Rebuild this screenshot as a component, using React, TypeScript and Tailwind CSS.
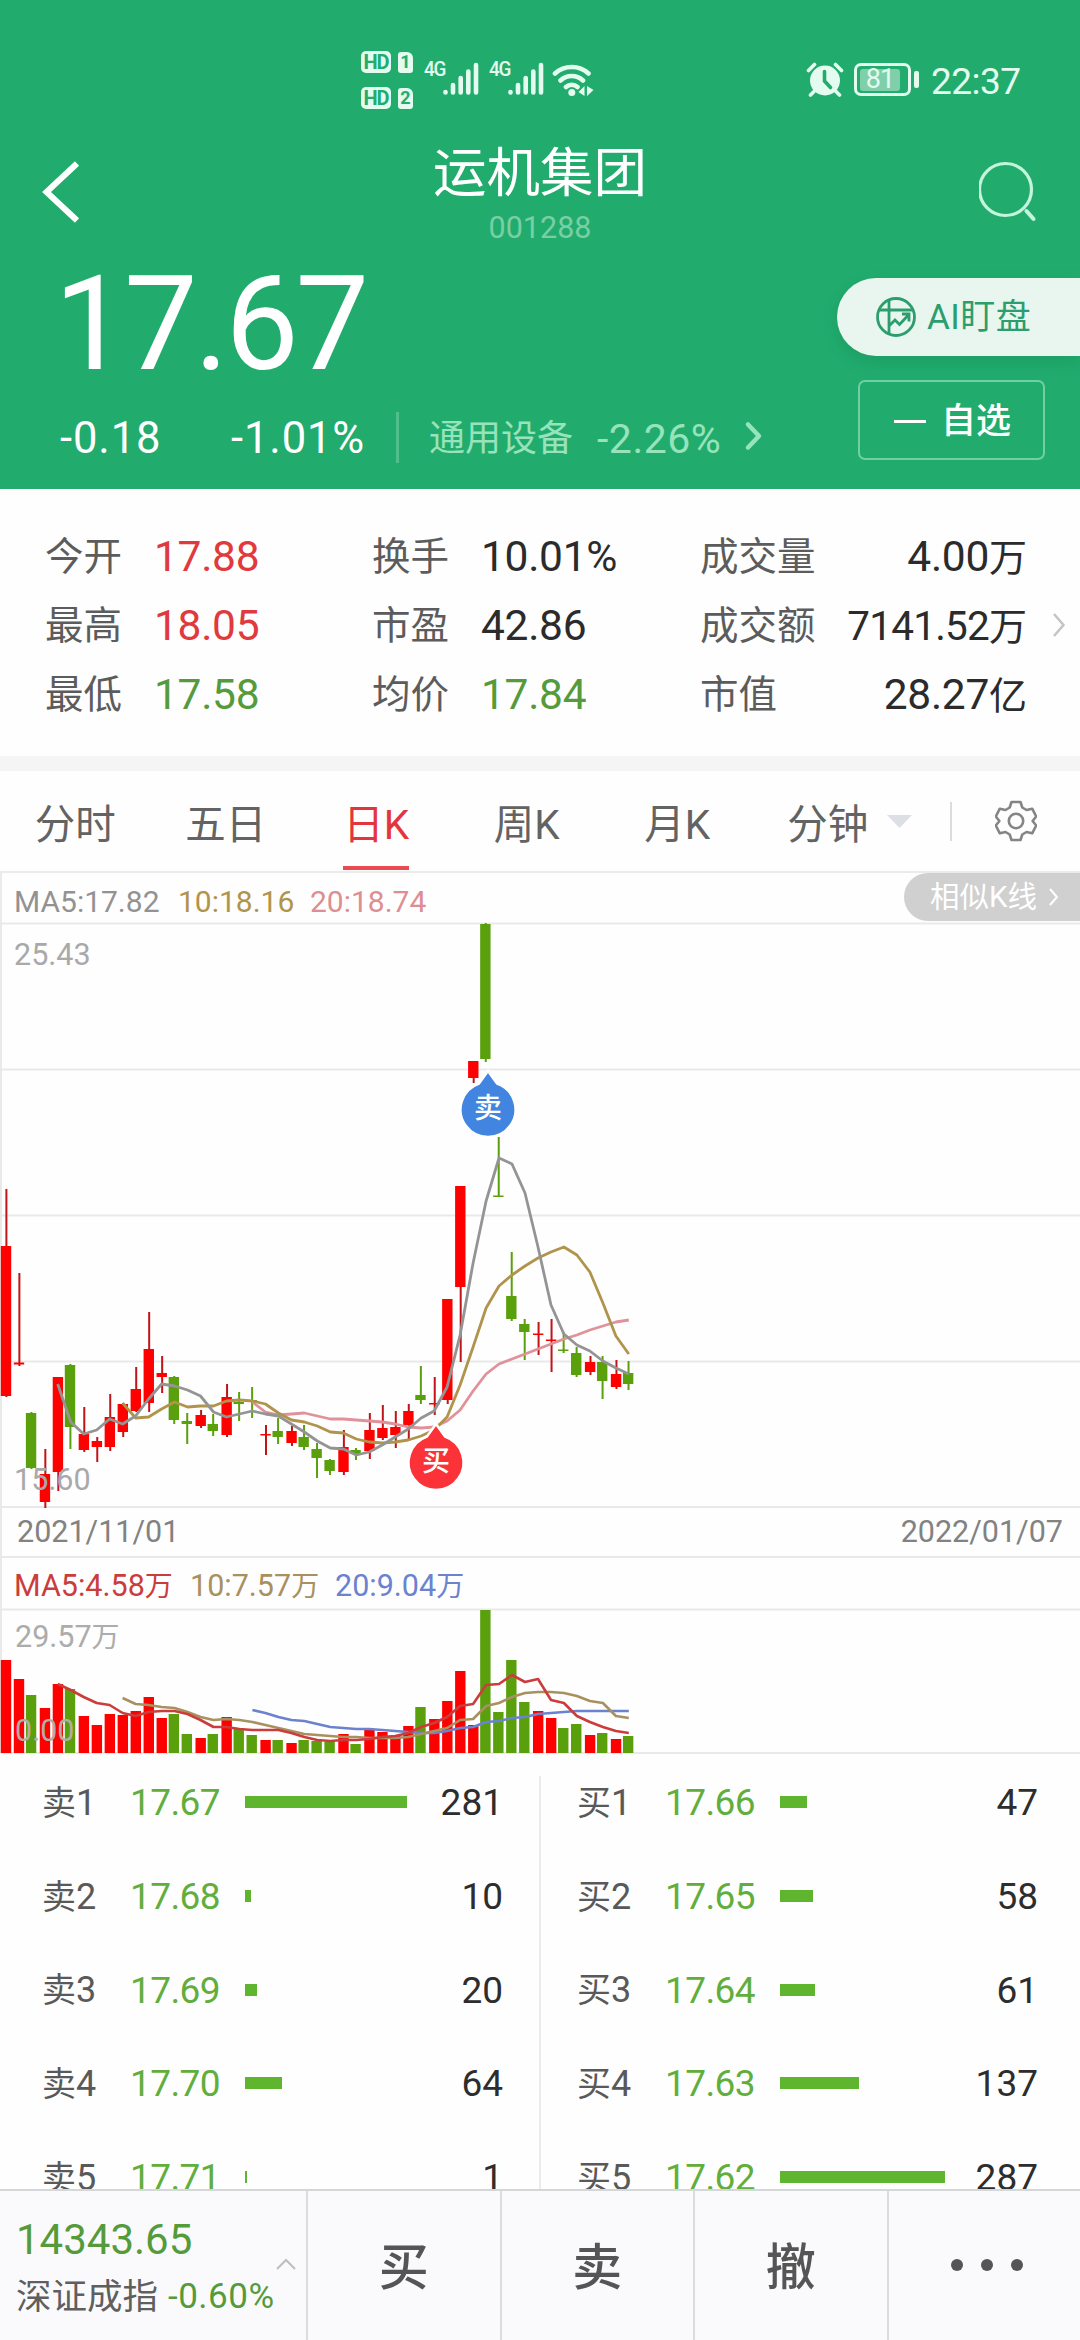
import type { ReactNode } from 'react';
import clsx from 'clsx';

const UP = '#ff0000';
const DOWN = '#5aa00c';

// [up, high, bodyTop, bodyBottom, low, volumeTop]
type Candle = [number, number, number, number, number, number];

const candles: Candle[] = [
  [1, 1189, 1246, 1396, 1397, 1660],
  [1, 1273, 1362.5, 1364.5, 1366, 1679],
  [0, 1412, 1413, 1468, 1469, 1695],
  [1, 1449, 1474, 1502, 1508, 1708],
  [1, 1377, 1377, 1472, 1491, 1684],
  [0, 1364, 1365, 1427, 1449, 1689],
  [1, 1407, 1434, 1450, 1452, 1716],
  [1, 1437, 1441, 1447, 1462, 1725],
  [1, 1394, 1417, 1447, 1451, 1714],
  [1, 1403, 1404, 1432, 1437, 1715],
  [1, 1367, 1389, 1411, 1412, 1711],
  [1, 1312, 1349, 1403, 1412, 1697],
  [1, 1356, 1373, 1377, 1393, 1718],
  [0, 1376, 1377, 1420, 1424, 1714],
  [0, 1413, 1421, 1424, 1444, 1734],
  [1, 1410, 1415, 1426, 1428, 1738],
  [0, 1414, 1424, 1431, 1436, 1734],
  [1, 1384, 1397, 1435, 1437, 1717],
  [0, 1392, 1402, 1404, 1421, 1728],
  [0, 1387, 1400, 1401, 1418, 1735],
  [1, 1425, 1434, 1435, 1455, 1740],
  [0, 1418, 1431, 1437, 1444, 1740],
  [1, 1426, 1431, 1443, 1446, 1743],
  [0, 1425, 1437, 1447, 1450, 1740],
  [0, 1443, 1449, 1458, 1478, 1741],
  [0, 1459, 1460, 1471, 1475, 1742],
  [1, 1430, 1447, 1472, 1475, 1734],
  [0, 1448, 1450, 1454, 1460, 1744],
  [1, 1413, 1430, 1451, 1459, 1730],
  [1, 1405, 1428, 1438, 1440, 1732],
  [1, 1411, 1427, 1435, 1448, 1736],
  [1, 1404, 1411, 1425, 1439, 1726],
  [0, 1366, 1395, 1400, 1404, 1707],
  [1, 1377, 1403, 1404, 1415, 1719],
  [1, 1299, 1299, 1400, 1404, 1701],
  [1, 1186, 1186, 1287, 1362, 1671],
  [1, 1061, 1061, 1078, 1083, 1725],
  [0, 923, 924, 1059, 1062, 1610],
  [0, 1137, 1195.5, 1196.5, 1197, 1712],
  [0, 1252, 1296, 1319, 1321, 1660],
  [0, 1319, 1324, 1332, 1360, 1702],
  [1, 1322, 1333.5, 1334.5, 1355, 1711],
  [1, 1319, 1339.5, 1340.5, 1372, 1718],
  [0, 1332, 1349.5, 1350.5, 1353, 1728],
  [0, 1347, 1353, 1375, 1377, 1724],
  [1, 1356, 1362, 1372, 1375, 1735],
  [0, 1356, 1362, 1381, 1399, 1733],
  [1, 1360, 1374, 1387, 1389, 1739],
  [0, 1361, 1373, 1384, 1390, 1736],
];

// Each average starts once enough sessions exist
const priceLines = [
  {
    start: 19,
    color: '#e0929a',
    ys: [1402, 1412, 1415, 1414, 1413, 1416, 1419, 1419, 1420, 1421, 1422, 1424, 1427, 1428, 1427, 1421, 1410, 1391, 1374, 1364, 1359, 1354, 1349, 1344, 1339, 1335, 1330, 1326, 1322, 1320],
  },
  {
    start: 9,
    color: '#b1944c',
    ys: [1403, 1418, 1417, 1409, 1402, 1407, 1406, 1406, 1401, 1400, 1401, 1404, 1413, 1420, 1422, 1426, 1432, 1433, 1439, 1442, 1443, 1442, 1440, 1436, 1430, 1417, 1385, 1347, 1308, 1286, 1275, 1266, 1258, 1252, 1247, 1255, 1272, 1303, 1336, 1354],
  },
  {
    start: 4,
    color: '#949494',
    ys: [1384, 1422, 1434, 1430, 1419, 1424, 1416, 1399, 1384, 1386, 1390, 1396, 1412, 1417, 1414, 1411, 1414, 1416, 1424, 1432, 1441, 1448, 1449, 1455, 1452, 1445, 1437, 1429, 1418, 1411, 1387, 1335, 1263, 1201, 1158, 1164, 1193, 1247, 1305, 1334, 1345, 1351, 1361, 1368, 1374],
  },
];

const volumeLines = [
  {
    start: 19,
    color: '#6b83cf',
    ys: [1710, 1713, 1717, 1720, 1721, 1724, 1727, 1728, 1729, 1729, 1730, 1731, 1732, 1733, 1733, 1731, 1728, 1727, 1722, 1721, 1718, 1717, 1714, 1713, 1712, 1711, 1711, 1711, 1711, 1711],
  },
  {
    start: 9,
    color: '#a9905f',
    ys: [1698, 1704, 1705, 1707, 1708, 1712, 1717, 1720, 1719, 1720, 1722, 1725, 1728, 1731, 1734, 1735, 1736, 1737, 1737, 1738, 1738, 1738, 1737, 1734, 1731, 1728, 1720, 1719, 1706, 1703, 1697, 1693, 1692, 1692, 1693, 1696, 1701, 1703, 1716, 1718],
  },
  {
    start: 4,
    color: '#cb3d3d',
    ys: [1684, 1690, 1697, 1703, 1705, 1713, 1716, 1712, 1711, 1711, 1714, 1720, 1727, 1727, 1729, 1730, 1730, 1730, 1733, 1737, 1740, 1741, 1740, 1740, 1739, 1737, 1736, 1733, 1727, 1723, 1717, 1706, 1704, 1685, 1684, 1675, 1682, 1679, 1700, 1703, 1716, 1722, 1727, 1731, 1733],
  },
];

const stats = [
  {
    className: 'w-[327px]',
    valueClass: 'w-[218px]',
    rows: [
      { label: '今开', value: '17.88', color: 'text-[#e0393e]' },
      { label: '最高', value: '18.05', color: 'text-[#e0393e]' },
      { label: '最低', value: '17.58', color: 'text-[#559a3b]' },
    ],
  },
  {
    className: 'w-[328px]',
    valueClass: 'w-[219px]',
    rows: [
      { label: '换手', value: '10.01%', color: 'text-[#2b2b2b]' },
      { label: '市盈', value: '42.86', color: 'text-[#2b2b2b]' },
      { label: '均价', value: '17.84', color: 'text-[#559a3b]' },
    ],
  },
  {
    className: 'w-[327px]',
    valueClass: 'text-right',
    rows: [
      { label: '成交量', value: '4.00', unit: '万', color: 'text-[#2b2b2b]' },
      { label: '成交额', value: '7141.52', unit: '万', color: 'text-[#2b2b2b]', small: true },
      { label: '市值', value: '28.27', unit: '亿', color: 'text-[#2b2b2b]' },
    ],
  },
];

const tabs = ['分时', '五日', '日K', '周K', '月K', '分钟'];

const sells = [
  { label: '卖', price: '17.67', count: 281 },
  { label: '卖', price: '17.68', count: 10 },
  { label: '卖', price: '17.69', count: 20 },
  { label: '卖', price: '17.70', count: 64 },
  { label: '卖', price: '17.71', count: 1 },
];

const buys = [
  { label: '买', price: '17.66', count: 47 },
  { label: '买', price: '17.65', count: 58 },
  { label: '买', price: '17.64', count: 61 },
  { label: '买', price: '17.63', count: 137 },
  { label: '买', price: '17.62', count: 287 },
];

const centerX = (i: number) => 5.5 + 12.98 * i;

const toPoints = (start: number, ys: number[], top: number) =>
  ys.map((y, i) => `${(centerX(start + i) + 0.3).toFixed(1)},${y - top}`).join(' ');

const SignalBars = () => (
  <svg width="36" height="34" viewBox="0 0 36 34" fill="none" stroke="#e4fbef" strokeWidth="4.6" strokeLinecap="round">
    <path d="M2.5 30v.5M10 23v7.5M17.7 16v14.5M25.3 9.5v21M33 3v27.5" />
  </svg>
);

const SimBadge = ({ n }: { n: string }) => (
  <div className="flex items-center gap-[7px]">
    <span className="flex h-[22px] w-[30px] items-center justify-center rounded-[5px] bg-[#e4fbef] text-[20px] font-bold leading-none tracking-[-1px] text-[#21ac6e]">
      HD
    </span>
    <span className="flex h-[21px] w-[15px] items-center justify-center rounded-[3px] rounded-tr-[6px] bg-[#e4fbef] text-[18px] font-bold leading-none text-[#21ac6e]">
      {n}
    </span>
  </div>
);

const StatusBar = () => (
  <div className="flex h-[124px] items-start pl-[361px] pt-[51px] text-[#e4fbef]">
    <div className="flex flex-col gap-[14px]">
      <SimBadge n="1" />
      <SimBadge n="2" />
    </div>
    <div className="ml-[11px] flex items-start pt-[11px]">
      <span className="w-[19px] origin-left scale-x-90 text-[21px] font-medium leading-[15px] tracking-[-1.5px]">4G</span>
      <SignalBars />
      <span className="ml-[10px] w-[19px] origin-left scale-x-90 text-[21px] font-medium leading-[15px] tracking-[-1.5px]">4G</span>
      <SignalBars />
    </div>
    <svg className="ml-[8px] mt-[10px]" width="44" height="36" viewBox="0 0 44 36" fill="none" stroke="#e4fbef" strokeWidth="4.6" strokeLinecap="round">
      <path d="M3 12.5a25 25 0 0 1 33.500 0M8.500 19.500a16.500 16.500 0 0 1 22.500 0M14 26a8.500 8.500 0 0 1 11.500 0" />
      <circle cx="19.8" cy="31.5" r="3.5" fill="#e4fbef" stroke="none" />
      <path d="M32.500 25v10l-6-4zM35 25v10l6.500-6z" fill="#e4fbef" stroke="none" />
    </svg>
    <svg className="ml-[210px] mt-[11px]" width="38" height="35" viewBox="0 0 38 35">
      <circle cx="19" cy="18.5" r="15" fill="#e4fbef" />
      <path d="M2.500 8.500l6-6M35.500 8.500l-6-6M8 29.500l-3.500 3.500M30 29.500l3.500 3.500" stroke="#e4fbef" strokeWidth="3.6" strokeLinecap="round" />
      <path d="M18.500 9.500v9.500l6 6.500" stroke="#21ac6e" strokeWidth="3.6" fill="none" strokeLinecap="round" />
    </svg>
    <div className="ml-[10px] mt-[12px] flex items-center gap-[3px]">
      <span className="flex h-[33px] w-[57px] items-center rounded-[7px] border-[3px] border-[#e4fbef] pl-[3px]">
        <span className="flex h-[22px] w-[40px] items-center justify-center rounded-[3px] bg-[#80cfab] text-[27px] leading-none tracking-[-1px]">81</span>
      </span>
      <span className="h-[17px] w-[5px] rounded-[2px] bg-[#e4fbef]" />
    </div>
    <span className="ml-[12px] mt-[10px] text-[37px] leading-[42px] tracking-[-0.5px]">22:37</span>
  </div>
);

const TitleBar = () => (
  <div className="flex h-[130px] justify-between pl-[41px] pr-[41px]">
    <svg className="mt-[36px]" width="60" height="64" viewBox="0 0 60 64" fill="none" stroke="#fff" strokeWidth="6">
      <path d="M36 3.500L5.500 32L36 60.500" />
    </svg>
    <div className="flex flex-col items-center">
      <h1 className="mt-[23px] text-[53.5px] leading-[54px]">运机集团</h1>
      <span className="mt-[11px] text-[30.5px] leading-[32px] text-[#79cfa4]">001288</span>
    </div>
    <svg className="mt-[36px]" width="60" height="64" viewBox="0 0 60 64" fill="none" stroke="#c4f5dc" strokeWidth="3.2" strokeLinecap="round">
      <circle cx="26.5" cy="29.500" r="26" />
      <path d="M47.500 51l7 8" strokeWidth="4" />
    </svg>
  </div>
);

const Quote = () => (
  <div className="flex justify-between">
    <div>
      <div className="ml-[54px] mt-[3px] h-[134px] text-[131px] leading-[134px] tracking-[-3.5px]">17.67</div>
      <div className="mt-[20px] flex h-[53px] items-center">
        <span className="ml-[60px] w-[171px] pt-[3px] text-[43.5px] leading-none tracking-[0.9px]">-0.18</span>
        <span className="w-[165px] pt-[3px] text-[43.5px] leading-none tracking-[0.9px]">-1.01%</span>
        <span className="h-[51px] w-[3px] bg-[#4fc08c]" />
        <span className="ml-[30px] pt-[3px] text-[36px] leading-none text-[#97e3bb]">通用设备</span>
        <span className="ml-[24px] pt-[3px] text-[41px] leading-none tracking-[0.5px] text-[#97e3bb]">-2.26%</span>
        <svg className="mb-1 ml-[23px]" width="20" height="30" viewBox="0 0 20 30" fill="none" stroke="#97e3bb" strokeWidth="4.5" strokeLinecap="round" strokeLinejoin="round">
          <path d="M4 3.500L15 15L4 26.500" />
        </svg>
      </div>
    </div>
    <div className="flex flex-col items-end pt-[24px]">
      <button className="flex h-[78px] w-[243px] items-center rounded-l-full bg-[#e9f6ef] pl-[38px] text-[#2c9e6e] shadow-[0_6px_16px_rgba(0,70,35,0.14)]">
        <svg width="42" height="42" viewBox="0 0 42 42" fill="none" stroke="#2c9e6e" strokeWidth="2.8">
          <circle cx="21" cy="21" r="18.5" />
          <path d="M14 4v35M4 14h34M14 30l6-6l4.500 4.500L33.500 19M27 18h7v7.500" />
        </svg>
        <span className="ml-[10px] text-[35px] leading-none tracking-[0.5px]">AI盯盘</span>
      </button>
      <button className="mr-[35px] mt-[24px] flex h-[80px] w-[187px] items-center rounded-[7px] border-2 border-[#6fd0a1] pl-[34px]">
        <span className="mt-[3px] h-[3px] w-[32px] bg-white" />
        <span className="ml-[15px] mt-[3px] text-[35px] font-medium leading-none">自选</span>
      </button>
    </div>
  </div>
);

const Stats = () => (
  <section className="flex h-[267px] pl-[45px] pt-[34px]">
    {stats.map((col) => (
      <div key={col.rows[0].label} className={col.className}>
        {col.rows.map((row) => (
          <div key={row.label} className="flex h-[69px] items-center justify-between">
            <span className="text-[38.5px] leading-none text-[#5c5c5c]">{row.label}</span>
            <span className={clsx('flex items-center leading-none', col.valueClass, row.color, col.valueClass === 'text-right' && 'justify-end', 'small' in row ? 'text-[40.5px] tracking-[-0.8px]' : 'text-[42.5px] tracking-[-0.3px]')}>
              {row.value}
              {'unit' in row && <span className="text-[38px] tracking-normal">{row.unit}</span>}
            </span>
          </div>
        ))}
      </div>
    ))}
    <svg className="ml-[25px] mt-[90px]" width="14" height="24" viewBox="0 0 14 24" fill="none" stroke="#c4c4c4" strokeWidth="2.5">
      <path d="M2 1l9.500 11L2 23" />
    </svg>
  </section>
);

const Tabs = () => (
  <nav className="flex h-[100px] items-center">
    {tabs.map((tab) => (
      <div key={tab} className={clsx('flex h-full w-[150.5px] flex-col items-center', tab === '日K' ? 'text-[#e5353c]' : 'text-[#636363]')}>
        <span className="mt-[28px] text-[40.5px] leading-[52px]">{tab}</span>
        {tab === '日K' && <span className="mt-[15px] h-[4px] w-[66px] bg-[#e84b52]" />}
      </div>
    ))}
    <svg className="-ml-[16px] mt-px" width="25" height="13" viewBox="0 0 25 13" fill="#dcdfe3">
      <path d="M0 0h25L12.500 13z" />
    </svg>
    <span className="ml-[38px] h-[39px] w-[2px] bg-[#dcdcdc]" />
    <svg className="ml-[43px]" width="42" height="42" viewBox="0 0 42 42" fill="none" stroke="#858585" strokeWidth="2.6" strokeLinejoin="round">
      <path d="M16.500 2h9l1.800 5.500l4.200 2.500l5.700-1.300l4 7.800l-3.600 4.500l3.600 4.500l-4 7.800l-5.700-1.300l-4.200 2.500L25.500 40h-9l-1.800-5.500l-4.200-2.500l-5.700 1.300l-4-7.800L4.400 21L.8 16.500l4-7.800l5.700 1.300l4.200-2.500z" />
      <circle cx="21" cy="21" r="7.2" />
    </svg>
  </nav>
);

const Marker = ({ x, y, color, children }: { x: number; y: number; color: string; children: ReactNode }) => (
  <g transform={`translate(${x} ${y})`}>
    <path d="M0 -38L-9 -25.500A27.500 27.500 0 1 0 9 -25.500Z" fill={color} stroke="#fff" strokeWidth="2.5" />
    <text x="0" y="9" textAnchor="middle" fontSize="28" fontWeight="500" fill="#fff">
      {children}
    </text>
  </g>
);

const PriceChart = () => (
  <div className="relative h-[586px]">
    <svg className="block" width="1080" height="586" viewBox="0 922 1080 586">
      {[923.5, 1069.5, 1215.5, 1361.5, 1507].map((y) => (
        <path key={y} d={`M0 ${y}H1080`} stroke="#e9e9e9" strokeWidth="2" />
      ))}
      <path d="M1 922V1508" stroke="#e9e9e9" strokeWidth="2" />
      {candles.map(([up, high, top, bottom, low], i) => {
        const x = centerX(i) + (up ? 0.5 : -0.4);
        return (
          <g key={i} fill={up ? UP : DOWN}>
            <rect x={x - 0.6} y={high} width="2" height={low - high} fill={up ? '#c01418' : DOWN} />
            <rect x={x - 5.2} y={top} width="10.4" height={Math.max(bottom - top, 1.5)} />
          </g>
        );
      })}
      {priceLines.map((line) => (
        <polyline key={line.color} points={toPoints(line.start, line.ys, 0)} fill="none" stroke={line.color} strokeWidth="2.8" strokeLinejoin="round" />
      ))}
      <Marker x={436} y={1462} color="#fb3238">买</Marker>
      <Marker x={488} y={1109} color="#4285e0">卖</Marker>
    </svg>
    <span className="absolute left-[14px] top-[17px] text-[30.5px] leading-[32px] text-[#a9a9a9]">25.43</span>
    <span className="absolute left-[14px] top-[542px] text-[30.5px] leading-[32px] text-[#a9a9a9]">15.60</span>
  </div>
);

const VolumeChart = () => (
  <div className="relative h-[146px]">
    <svg className="block" width="1080" height="146" viewBox="0 0 1080 146">
      <path d="M0 1.500H1080M0 145H1080M1 0V146" stroke="#e9e9e9" strokeWidth="2" />
      {candles.map(([up, , , , , volumeTop], i) => (
        <rect key={i} x={centerX(i) + (up ? 0.5 : -0.4) - 5.2} y={volumeTop - 1608} width="10.4" height={1753 - volumeTop} fill={up ? UP : DOWN} />
      ))}
      {volumeLines.map((line) => (
        <polyline key={line.color} points={toPoints(line.start, line.ys, 1608)} fill="none" stroke={line.color} strokeWidth="2.6" strokeLinejoin="round" />
      ))}
    </svg>
    <span className="absolute left-[15px] top-[13px] text-[30.5px] leading-[32px] text-[#acacac]">29.57<span className="text-[28px]">万</span></span>
    <span className="absolute left-[15px] top-[107px] text-[30.5px] leading-[32px] text-[#b4aca6]">0.00</span>
  </div>
);

const BookRow = ({ label, index, price, count }: { label: string; index: number; price: string; count: number }) => (
  <div className="flex h-[93.7px] items-center leading-none">
    <span className="flex w-[88px] items-center text-[#595959]">
      <span className="text-[34px]">{label}</span>
      <span className="text-[36px]">{index}</span>
    </span>
    <span className="w-[115px] text-[37px] tracking-[-0.6px] text-[#62ae3d]">{price}</span>
    <span className="mb-px h-[12px] bg-[#60b52f]" style={{ width: Math.max(count * 0.576, 2) }} />
    <span className="ml-auto text-[37px] text-[#2d2d2d]">{count}</span>
  </div>
);

const OrderBook = () => (
  <section className="flex h-[435px] overflow-hidden">
    <div className="w-[539px] pl-[42px] pr-[36px] pt-[2px]">
      {sells.map((row, i) => (
        <BookRow key={row.price} index={i + 1} {...row} />
      ))}
    </div>
    <div className="mt-[22px] w-[2px] bg-[#ececec]" />
    <div className="flex-1 pl-[36px] pr-[42px] pt-[2px]">
      {buys.map((row, i) => (
        <BookRow key={row.price} index={i + 1} {...row} />
      ))}
    </div>
  </section>
);

const BottomBar = () => (
  <footer className="flex h-[151px] border-t-2 border-[#d4d6d8] bg-[#fafafc]">
    <div className="flex w-[306px] items-start pl-[16px]">
      <div className="w-[260px] shrink-0 whitespace-nowrap">
        <div className="mt-[27px] text-[42px] leading-[44px] text-[#559a3b]">14343.65</div>
        <div className="mt-[13px] flex items-center leading-[44px]">
          <span className="text-[35.5px] text-[#5f5f5f]">深证成指</span>
          <span className="ml-[10px] text-[35px] tracking-[0.5px] text-[#559a3b]">-0.60%</span>
        </div>
      </div>
      <svg className="mt-[67px]" width="20" height="12" viewBox="0 0 20 12" fill="none" stroke="#bdbdbd" strokeWidth="2">
        <path d="M1 11l9-9l9 9" />
      </svg>
    </div>
    {['买', '卖', '撤'].map((action) => (
      <button key={action} className="w-[193.5px] border-l-2 border-[#d9dbdd] pt-[5px] text-[50px] font-medium text-[#555]">
        {action}
      </button>
    ))}
    <button className="flex flex-1 items-center justify-center gap-[18px] border-l-2 border-[#d9dbdd] pb-[1px] pl-[5px]">
      <span className="size-[12px] rounded-full bg-[#555]" />
      <span className="size-[12px] rounded-full bg-[#555]" />
      <span className="size-[12px] rounded-full bg-[#555]" />
    </button>
  </footer>
);

export default function App() {
  return (
    <div className="h-[2340px] w-[1080px] overflow-hidden bg-[#fefefe] font-[Roboto,'Noto_Sans_CJK_SC',sans-serif]">
      <header className="h-[489px] bg-[#21ac6e] text-white">
        <StatusBar />
        <TitleBar />
        <Quote />
      </header>
      <Stats />
      <div className="h-[15px] bg-[#f5f5f5]" />
      <Tabs />
      <div className="flex h-[51px] items-start justify-between border-l-2 border-t-2 border-[#ebebeb] pl-[12px]">
        <div className="flex pt-[12px] text-[30px] leading-[34px]">
          <span className="w-[164px] text-[#929292]">MA5:17.82</span>
          <span className="w-[132px] text-[#b1944c]">10:18.16</span>
          <span className="text-[#dd8e93]">20:18.74</span>
        </div>
        <div className="flex h-[48px] w-[176px] items-center rounded-l-full bg-[#d0d0d0] pl-[26px] pt-[2px] text-[29.5px] leading-none text-white">
          相似K线
          <svg className="mb-[2px] ml-[12px]" width="10" height="18" viewBox="0 0 10 18" fill="none" stroke="#fff" strokeWidth="2">
            <path d="M1 1l7 8l-7 8" />
          </svg>
        </div>
      </div>
      <PriceChart />
      <div className="flex h-[50px] items-center justify-between border-b-2 border-l-2 border-[#e9e9e9] pl-[15px] pr-[17px] text-[30.5px] leading-none text-[#828282]">
        <span>2021/11/01</span>
        <span>2022/01/07</span>
      </div>
      <div className="flex h-[50px] items-center border-l-2 border-[#e9e9e9] pl-[12px] pt-[7px] text-[30.5px] leading-none">
        <span className="w-[176px] text-[#cb3d3d]">MA5:4.58<span className="text-[28px]">万</span></span>
        <span className="w-[145px] text-[#a9905f]">10:7.57<span className="text-[28px]">万</span></span>
        <span className="text-[#6b83cf]">20:9.04<span className="text-[28px]">万</span></span>
      </div>
      <VolumeChart />
      <OrderBook />
      <BottomBar />
    </div>
  );
}
